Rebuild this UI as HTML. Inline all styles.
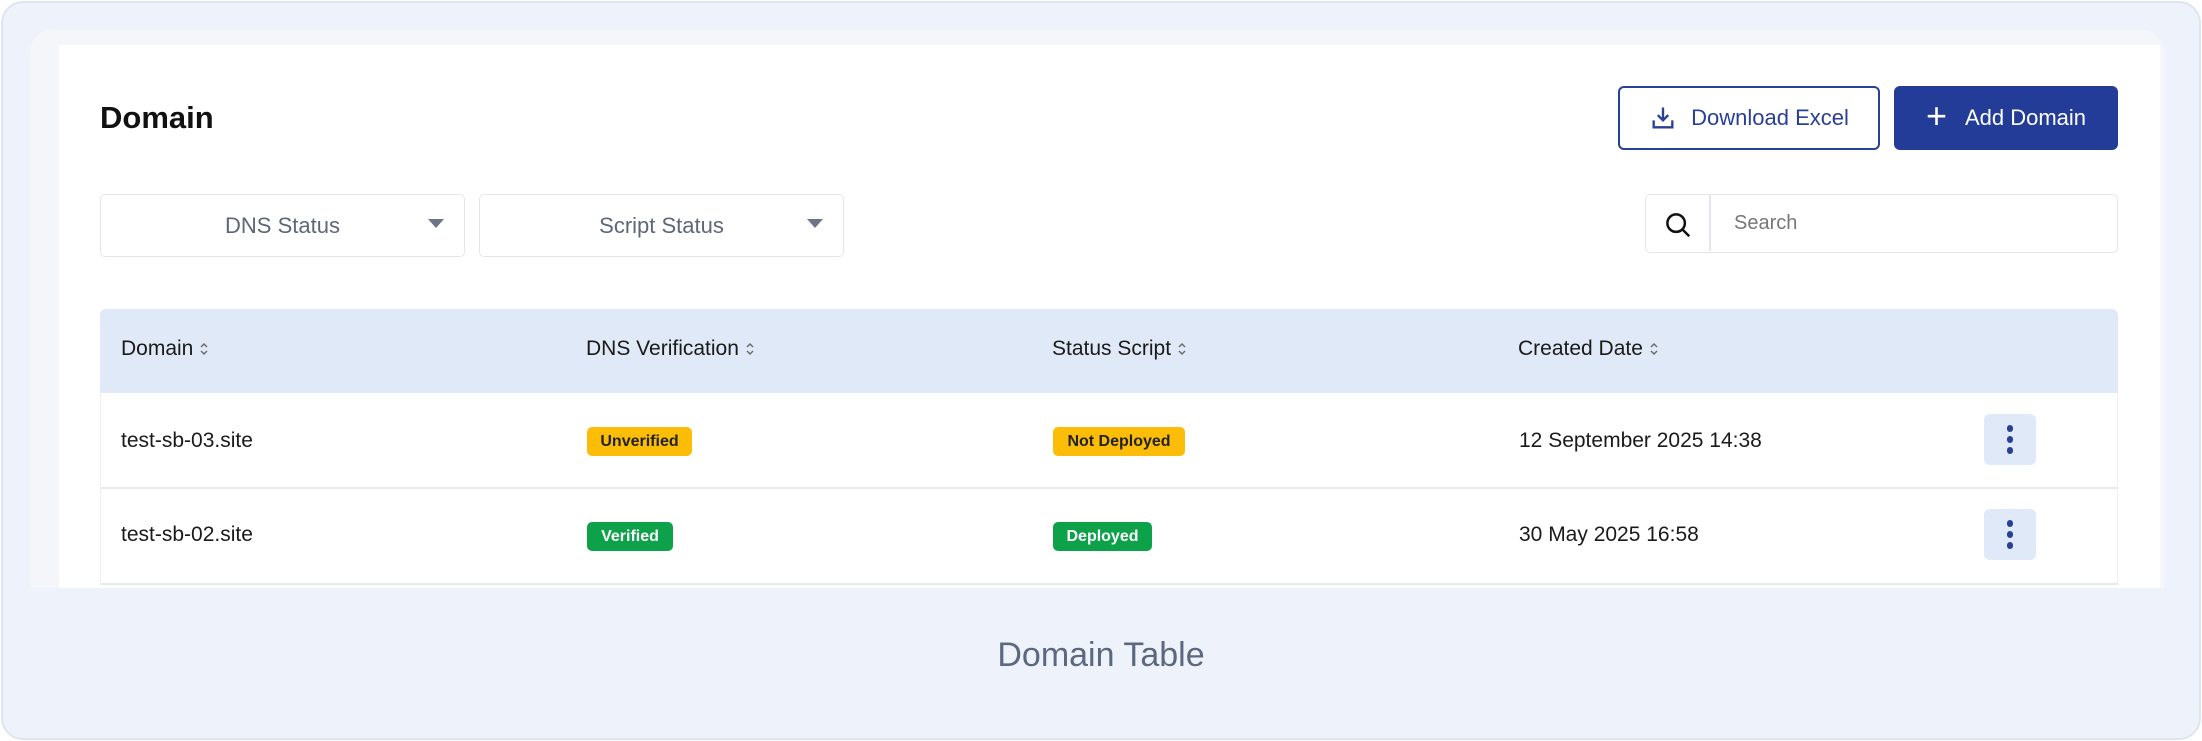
<!DOCTYPE html>
<html><head><meta charset="utf-8"><style>
*{box-sizing:border-box;margin:0;padding:0}
body{width:2202px;height:741px;background:#fff;font-family:"Liberation Sans",Arial,sans-serif;position:relative;overflow:hidden}
.outer{position:absolute;left:1px;top:1px;width:2200px;height:739px;background:#eef3fb;border:2px solid #dfe5ee;border-radius:22px}
.rim{position:absolute;left:30px;top:30px;width:2134px;height:558px;background:#f4f6f9;border-radius:22px 22px 0 0;overflow:hidden}
.panel{position:absolute;left:29px;top:15px;width:2101px;height:560px;background:#fff}
.abs{position:absolute}
.title{left:100px;top:100px;font-size:31px;font-weight:bold;color:#111}
.btn{top:86px;height:64px;border-radius:6px;display:flex;align-items:center;justify-content:center;font-size:22px}
.dl{left:1618px;width:262px;border:2px solid #2a3f96;color:#2a3f96;background:#fff}
.add{left:1894px;width:224px;background:#223c98;color:#fff}
.dd{top:194px;height:63px;width:365px;border:1.5px solid #e3e6ea;border-radius:5px;color:#5e6677;font-size:22px;display:flex;align-items:center;justify-content:center}
.tri{position:absolute;right:20px;top:24px;width:0;height:0;border-left:8px solid transparent;border-right:8px solid transparent;border-top:9px solid #6c7486}
.search{left:1645px;top:194px;width:473px;height:59px;border:1.5px solid #e3e6ea;border-radius:5px}
.thead{left:100px;top:309px;width:2018px;height:84px;background:#e0e9f8;border-radius:6px 6px 0 0}
.th{top:337px;font-size:21px;color:#1a1a1a;display:flex;align-items:center}
.th svg{margin-left:6px}
.row{left:100px;width:2018px;border-left:1.5px solid #eceff3;border-right:1.5px solid #eceff3;border-bottom:2px solid #e6e9ee}
.td{font-size:21px;color:#1a1a1a}
.badge{height:29px;border-radius:5px;font-size:16px;font-weight:bold;display:flex;align-items:center;justify-content:center}
.y{background:#fbbd08;color:#222}
.g{background:#0da24a;color:#fff}
.keb{left:1984px;width:52px;height:51px;background:#e0e9f8;border-radius:6px}
.keb i{position:absolute;left:23px;width:6px;height:7px;background:#2a3f96;border-radius:3px}
.cap{left:0;width:2202px;top:636px;text-align:center;font-size:34px;color:#5c6780}
</style></head><body>
<div class="outer"></div>
<div class="rim"><div class="panel"></div></div>
<div class="abs title">Domain</div>
<div class="abs btn dl"><svg width="28" height="28" viewBox="0 0 24 24" fill="none" stroke="#2a3f96" stroke-width="2" style="margin-right:14px"><path d="M12 3v11M7.5 9.5 12 14l4.5-4.5M4 14v6h16v-6"/></svg>Download Excel</div>
<div class="abs btn add"><span style="font-size:36px;font-weight:300;margin-right:18px;margin-top:-4px">+</span>Add Domain</div>
<div class="abs dd" style="left:100px">DNS Status<span class="tri"></span></div>
<div class="abs dd" style="left:479px">Script Status<span class="tri"></span></div>
<div class="abs search"><div class="abs" style="left:63px;top:0;width:1.5px;height:56px;background:#e3e6ea"></div>
<svg class="abs" style="left:17px;top:15px" width="30" height="30" viewBox="0 0 24 24" fill="none" stroke="#111" stroke-width="2"><circle cx="10.5" cy="10.5" r="7"/><path d="M15.5 15.5 21 21"/></svg>
<div class="abs" style="left:88px;top:17px;font-size:20px;color:#777">Search</div></div>
<div class="abs thead"></div>
<div class="abs th" style="left:121px">Domain<svg width="10" height="16" viewBox="0 0 10 16" fill="none" stroke="#666" stroke-width="1.4"><path d="M2 6l3-3 3 3M2 10l3 3 3-3"/></svg></div>
<div class="abs th" style="left:586px">DNS Verification<svg width="10" height="16" viewBox="0 0 10 16" fill="none" stroke="#666" stroke-width="1.4"><path d="M2 6l3-3 3 3M2 10l3 3 3-3"/></svg></div>
<div class="abs th" style="left:1052px">Status Script<svg width="10" height="16" viewBox="0 0 10 16" fill="none" stroke="#666" stroke-width="1.4"><path d="M2 6l3-3 3 3M2 10l3 3 3-3"/></svg></div>
<div class="abs th" style="left:1518px">Created Date<svg width="10" height="16" viewBox="0 0 10 16" fill="none" stroke="#666" stroke-width="1.4"><path d="M2 6l3-3 3 3M2 10l3 3 3-3"/></svg></div>
<div class="abs row" style="top:393px;height:96px"></div>
<div class="abs row" style="top:489px;height:96px"></div>
<div class="abs td" style="left:121px;top:429px">test-sb-03.site</div>
<div class="abs badge y" style="left:587px;top:427px;width:105px">Unverified</div>
<div class="abs badge y" style="left:1053px;top:427px;width:132px">Not Deployed</div>
<div class="abs td" style="left:1519px;top:429px">12 September 2025 14:38</div>
<div class="abs keb" style="top:414px"><i style="top:11px"></i><i style="top:22px"></i><i style="top:33px"></i></div>
<div class="abs td" style="left:121px;top:523px">test-sb-02.site</div>
<div class="abs badge g" style="left:587px;top:522px;width:86px">Verified</div>
<div class="abs badge g" style="left:1053px;top:522px;width:99px">Deployed</div>
<div class="abs td" style="left:1519px;top:523px">30 May 2025 16:58</div>
<div class="abs keb" style="top:509px"><i style="top:11px"></i><i style="top:22px"></i><i style="top:33px"></i></div>
<div class="abs" style="left:30px;top:588px;width:2134px;height:20px;background:#eef3fb"></div>
<div class="abs cap">Domain Table</div>
</body></html>
